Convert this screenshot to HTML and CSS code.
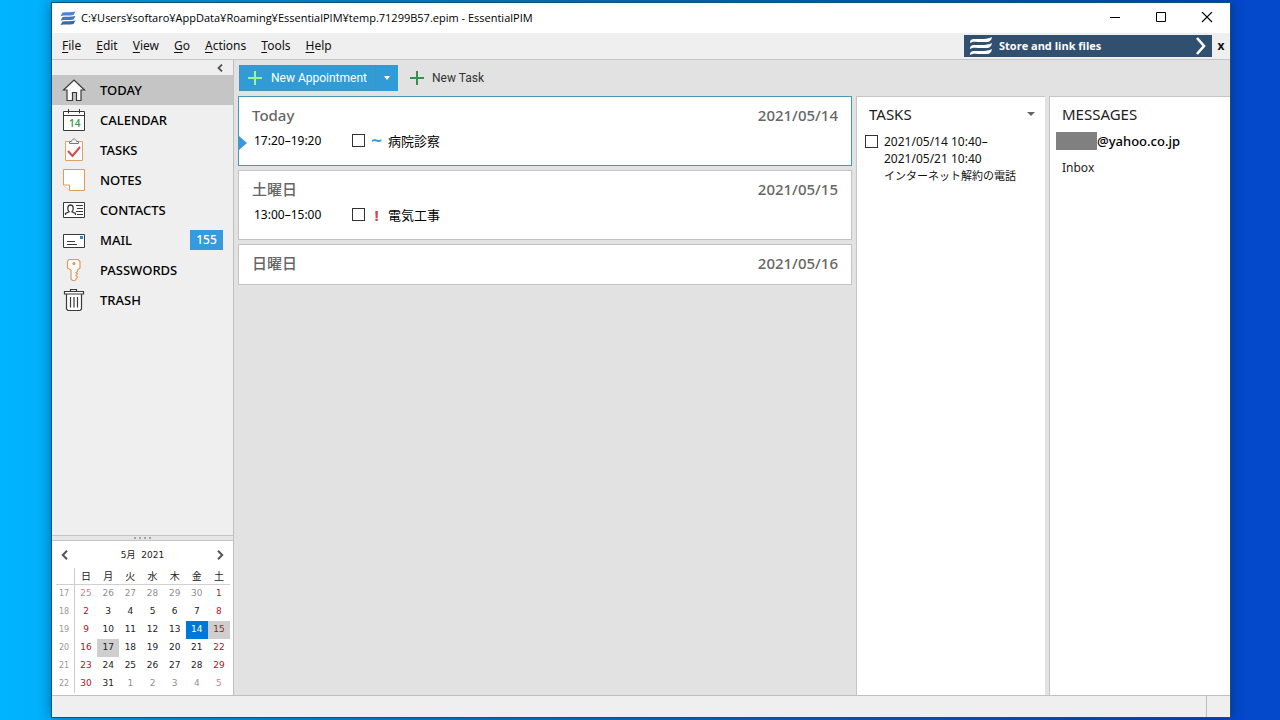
FILE: index.html
```html
<!DOCTYPE html>
<html lang="ja">
<head>
<meta charset="utf-8">
<title>EssentialPIM</title>
<link rel="stylesheet" href="styles.css">
</head>
<body>
<div class="window">
  <header class="titlebar">
    <svg class="app-logo" width="16" height="14" viewBox="0 0 16 14"><g fill="#4a86cf"><path d="M2.500 1.500C6 1 11 1.500 15.500.5L13.500 4C10 5 5 4 .5 5z"/><path d="M2.500 6C6 5.500 11 6 15.500 5l-2 3.500C10 9.500 5 8.500.5 9.500z" fill="#3f78c2"/><path d="M2.500 10.500C6 10 11 10.500 15.500 9.500l-2 3.500C10 14 5 13 .5 14z" fill="#3569b0"/></g></svg>
    <h1 class="title">C:¥Users¥softaro¥AppData¥Roaming¥EssentialPIM¥temp.71299B57.epim - EssentialPIM</h1>
    <div class="window-buttons">
      <button aria-label="Minimize"><svg width="12" height="12" viewBox="0 0 12 12"><path d="M1 5.500h10" stroke="#000"/></svg></button>
      <button aria-label="Maximize"><svg width="12" height="12" viewBox="0 0 12 12"><path d="M1.500 .5h9v9h-9z" fill="none" stroke="#000"/></svg></button>
      <button aria-label="Close"><svg width="12" height="12" viewBox="0 0 12 12"><path d="M1 0l10 10M11 0L1 10" stroke="#000" stroke-width="1.100"/></svg></button>
    </div>
  </header>
  <div class="menubar">
    <nav class="menus">
      <button><u>F</u>ile</button><button><u>E</u>dit</button><button><u>V</u>iew</button><button><u>G</u>o</button><button><u>A</u>ctions</button><button><u>T</u>ools</button><button><u>H</u>elp</button>
    </nav>
    <a class="promo" href="#">
      <svg width="22" height="18" viewBox="0 0 22 18" fill="#fff"><path d="M0 6C0 0 5 2.500 11 2c5 0 8-.5 11-2-1 6-5 5-11 5-5 0-8-1-11 1z"/><path d="M0 12C0 6 5 8.500 11 8c5 0 8-.5 11-2-1 6-5 5-11 5-5 0-8-1-11 1z"/><path d="M0 18C0 12 5 14.500 11 14c5 0 8-.5 11-2-1 6-5 5-11 5-5 0-8-1-11 1z"/></svg>
      <span>Store and link files</span>
      <svg class="promo-arrow" width="12" height="18" viewBox="0 0 12 18"><path d="M2 1l7 8-7 8" fill="none" stroke="#fff" stroke-width="2.600"/></svg>
    </a>
    <button class="promo-close" aria-label="Hide banner">x</button>
  </div>
  <div class="body">
    <aside class="sidebar">
      <button class="collapse" aria-label="Collapse sidebar"><svg width="6" height="8" viewBox="0 0 6 8"><path d="M5 .5L1.500 4 5 7.500" fill="none" stroke="#555" stroke-width="1.800"/></svg></button>
      <nav class="modules">
        <a class="module current" href="#"><svg width="24" height="24" viewBox="0 0 24 24" fill="none" stroke="#3a3a3a" stroke-width="1.200"><path d="M1.500 12L12 2 22.500 12H19v10.500h-4.500V14.500h-4v8H5V12z" fill="#fafafa"/></svg><span>TODAY</span></a>
        <a class="module" href="#"><svg width="24" height="24" viewBox="0 0 24 24" fill="none" stroke="#3a3a3a"><path d="M1.500 3.500h21v19h-21z" fill="#fff"/><path d="M1.500 7.500h21M6.500 1v4.500M17.500 1v4.500"/><text class="cal-num" x="7" y="19" stroke="none">14</text></svg><span>CALENDAR</span></a>
        <a class="module" href="#"><svg width="24" height="24" viewBox="0 0 24 24" fill="none"><path d="M3.500 3.500h17v19h-17z" fill="#fafafa" stroke="#dfa266"/><path d="M7.500 5.500v-2h2c1-3.500 4-3.500 5 0h2v2z" fill="#f4f4f4" stroke="#777"/><path d="M6 13l4.500 5L18 9" stroke="#cf4b4b" stroke-width="2"/></svg><span>TASKS</span></a>
        <a class="module" href="#"><svg width="24" height="24" viewBox="0 0 24 24" fill="#fff" stroke="#e09a55"><path d="M1.500 1.500h21v21H7.500l-6-5.500z"/><path d="M1.500 17h6v5.500"/></svg><span>NOTES</span></a>
        <a class="module" href="#"><svg width="24" height="24" viewBox="0 0 24 24" fill="none" stroke="#3a3a3a"><path d="M1.500 4.500h21v15h-21z" fill="#fff"/><path d="M3.500 17v-1.500L7 13.800C5.200 12 5.200 7 8.500 7s3.300 5 1.500 6.800l3.500 1.700V17" stroke-width="1.300"/><path d="M14 7.500h7M15 10.500h6M14 13.500h7M15 16.500h6"/></svg><span>CONTACTS</span></a>
        <a class="module" href="#"><svg width="24" height="24" viewBox="0 0 24 24" fill="none" stroke="#3a3a3a"><path d="M1.500 6.500h21v13h-21z" fill="#fff"/><path d="M5 13.500h8M5 16.500h10"/><path d="M18 8h3v3h-3z" fill="#2d86cb" stroke="none"/></svg><span>MAIL</span><span class="badge">155</span></a>
        <a class="module" href="#"><svg width="24" height="24" viewBox="0 0 24 24" fill="#fafafa" stroke="#e09a62" stroke-width="1.200"><path d="M7 1.500h9l2 2v6.500L15.500 12v1.500l-1.500 1 1.500 1.500-1.500 1.500 1.500 1.500-2.500 3.500h-2.500l-1.500-1.500V12L5.500 10V3.500z"/><circle cx="12" cy="5.500" r="1" fill="#e08a50"/></svg><span>PASSWORDS</span></a>
        <a class="module" href="#"><svg width="24" height="24" viewBox="0 0 24 24" fill="none" stroke="#3a3a3a" stroke-width="1.200"><path d="M4.500 5.500h15v15.500l-1.500 1.500H6l-1.500-1.500z" fill="#fff"/><path d="M2.500 3.500h19v2.500h-19z" fill="#fff"/><path d="M8.500 3.500v-2h6v2M8.500 9v10.500M12 9v10.500M15.500 9v10.500"/></svg><span>TRASH</span></a>
      </nav>
      <div class="splitter"><i></i><i></i><i></i><i></i></div>
      <section class="mini-calendar">
        <div class="month-bar">
          <button aria-label="Previous month"><svg width="7" height="10" viewBox="0 0 7 10"><path d="M6 .8L1.800 5 6 9.200" fill="none" stroke="#555" stroke-width="2"/></svg></button>
          <span>5月&nbsp; 2021</span>
          <button aria-label="Next month"><svg width="7" height="10" viewBox="0 0 7 10"><path d="M1 .8L5.200 5 1 9.200" fill="none" stroke="#555" stroke-width="2"/></svg></button>
        </div>
        <table class="month">
          <thead><tr><th></th><th>日</th><th>月</th><th>火</th><th>水</th><th>木</th><th>金</th><th>土</th></tr></thead>
          <tbody>
            <tr><th>17</th><td class="other sun">25</td><td class="other">26</td><td class="other">27</td><td class="other">28</td><td class="other">29</td><td class="other">30</td><td class="sun">1</td></tr>
            <tr><th>18</th><td class="sun">2</td><td>3</td><td>4</td><td>5</td><td>6</td><td>7</td><td class="sun">8</td></tr>
            <tr><th>19</th><td class="sun">9</td><td>10</td><td>11</td><td>12</td><td>13</td><td class="selected">14</td><td class="sun marked">15</td></tr>
            <tr><th>20</th><td class="sun">16</td><td class="marked">17</td><td>18</td><td>19</td><td>20</td><td>21</td><td class="sun">22</td></tr>
            <tr><th>21</th><td class="sun">23</td><td>24</td><td>25</td><td>26</td><td>27</td><td>28</td><td class="sun">29</td></tr>
            <tr><th>22</th><td class="sun">30</td><td>31</td><td class="other">1</td><td class="other">2</td><td class="other">3</td><td class="other">4</td><td class="other sun">5</td></tr>
          </tbody>
        </table>
      </section>
    </aside>
    <main class="workspace">
      <div class="toolbar">
        <div class="split-button">
          <button class="new-appointment"><svg width="14" height="14" viewBox="0 0 14 14"><path d="M7 0v14M0 7h14" stroke="#98f598" stroke-width="2"/></svg>New Appointment</button>
          <button class="drop" aria-label="More appointment types"><svg width="6" height="4" viewBox="0 0 6 4"><path d="M0 0h6L3 4z" fill="#fff"/></svg></button>
        </div>
        <button class="new-task"><svg width="14" height="14" viewBox="0 0 14 14"><path d="M7 0v14M0 7h14" stroke="#398d4e" stroke-width="2"/></svg>New Task</button>
      </div>
      <div class="columns">
        <div class="days">
          <section class="day today">
            <h2><span>Today</span><span>2021/05/14</span></h2>
            <div class="event"><span class="time">17:20–19:20</span><input type="checkbox" id="e1"><span class="mark low">~</span><label for="e1">病院診察</label></div>
            <svg class="now" width="8" height="14" viewBox="0 0 8 14"><path d="M0 0l8 7-8 7z" fill="#3b98dc"/></svg>
          </section>
          <section class="day">
            <h2><span>土曜日</span><span>2021/05/15</span></h2>
            <div class="event"><span class="time">13:00–15:00</span><input type="checkbox" id="e2"><span class="mark high">!</span><label for="e2">電気工事</label></div>
          </section>
          <section class="day empty">
            <h2><span>日曜日</span><span>2021/05/16</span></h2>
          </section>
        </div>
        <section class="panel tasks">
          <h2>TASKS<button aria-label="Task options"><svg width="8" height="4" viewBox="0 0 8 4"><path d="M0 0h8L4 4z" fill="#666"/></svg></button></h2>
          <div class="task"><input type="checkbox" id="t1"><label for="t1">2021/05/14 10:40–<br>2021/05/21 10:40<br><span class="kana">インターネット解約の電話</span></label></div>
        </section>
        <section class="panel messages">
          <h2>MESSAGES</h2>
          <div class="account"><span class="redacted"></span>@yahoo.co.jp</div>
          <a class="folder" href="#">Inbox</a>
        </section>
      </div>
    </main>
  </div>
  <footer class="statusbar"><span></span></footer>
</div>
</body>
</html>
```
FILE: styles.css
```css
* { box-sizing: border-box; }
body {
  margin: 0;
  height: 100vh;
  padding: 2px 49px 2px 51px;
  background: linear-gradient(to right, #00b4ff 0, #00b0fa 4%, #0b7fc9 40%, #0450c0 90%, #0449cb 97%, #0448cc 100%);
  font: 12px/16px "Noto Sans", "Noto Sans CJK JP", sans-serif;
  color: #111;
}
button { margin: 0; padding: 0; border: 0; background: none; font: inherit; color: inherit; display: flex; align-items: center; justify-content: center; }
a { color: inherit; text-decoration: none; }
h1, h2 { margin: 0; font: inherit; }
svg { display: block; flex: none; }
input[type="checkbox"] { appearance: none; flex: none; width: 13px; height: 13px; margin: 0; border: 1px solid #333; background: #fff; }

.window { display: flex; flex-direction: column; height: 100%; border: 1px solid #0a5580; background: #efefef; background-clip: padding-box; box-shadow: 0 0 12px rgba(0, 20, 60, .45); }
.titlebar { display: flex; align-items: center; height: 30px; padding-left: 8px; background: #fff; }
.title { flex: 1; margin-left: 5px; font-family: "Open Sans", sans-serif; font-size: 11px; white-space: nowrap; color: #000; }
.window-buttons { display: flex; }
.window-buttons button { width: 46px; height: 28px; }
.menubar { display: flex; align-items: center; height: 27px; border-bottom: 1px solid #c6c6c6; }
.menus { display: flex; flex: 1; gap: 15px; padding-left: 10px; }
.menus button { display: block; }
.menus u { text-underline-offset: 2px; }
.promo { display: flex; align-items: center; width: 248px; height: 22px; padding: 0 5px 0 6px; background: #31506f; color: #fff; font: bold 11px/16px "Open Sans", sans-serif; }
.promo span { flex: 1; margin-left: 7px; }
.promo-close { width: 18px; font-weight: bold; }

.body { display: flex; flex: 1; min-height: 0; }
.sidebar { display: flex; flex-direction: column; width: 182px; border-right: 1px solid #bfbfbf; }
.collapse { align-self: flex-end; width: 26px; height: 15px; }
.modules { flex: 1; }
.module { display: flex; align-items: center; gap: 14px; height: 30px; padding: 0 10px; font-size: 13px; font-weight: 500; color: #000; }
.module.current { background: #c5c5c5; }
.cal-num { font: 600 10px "Open Sans", sans-serif; fill: #3b9a4a; }
.badge { margin-left: auto; width: 33px; line-height: 20px; background: #369ade; color: #fff; font-size: 12px; text-align: center; }
.splitter { display: flex; align-items: center; justify-content: center; gap: 3px; height: 6px; border: solid #c4c4c4; border-width: 1px 0; background: #e6e6e6; }
.splitter i { width: 2px; height: 2px; background: #a5a5a5; }
.mini-calendar { padding: 0 3px 2px 4px; background: #fff; font-size: 10px; }
.month-bar { display: flex; align-items: center; justify-content: space-between; height: 27px; padding: 0 6px 0 5px; color: #222; }
.month-bar span { font-family: "DejaVu Sans", "Noto Sans CJK JP", sans-serif; font-size: 9px; }
.month { width: 100%; table-layout: fixed; border-collapse: separate; border-spacing: 0; font: 9px/12px "DejaVu Sans", "Noto Sans CJK JP", sans-serif; color: #222; }
.month th, .month td { height: 18px; padding: 0 0 2px; font-weight: normal; text-align: center; }
.month th:first-child { width: 19px; border-right: 1px solid #ccc; padding: 0 2px 0 0; color: #999; font-size: 8px; }
.month thead th { height: 17px; padding: 1px 0 0; border-bottom: 1px solid #d0d0d0; font-size: 10px; }
.month td.sun { color: #b0141e; }
.month td.other { color: #909090; }
.month td.other.sun { color: #d07f85; }
.month td.marked { background: #cecece; }
.month td.selected { background: #0076d6; color: #fff; }

.workspace { display: flex; flex-direction: column; flex: 1; min-width: 0; padding-left: 4px; background: #e2e2e2; }
.toolbar { display: flex; align-items: center; gap: 12px; height: 36px; padding-left: 1px; font-family: Roboto, sans-serif; }
.split-button { display: flex; height: 26px; background: #319bd6; color: #fff; }
.new-appointment { gap: 9px; width: 137px; border: 1px dotted #5c87a3; }
.drop { width: 22px; }
.new-task { gap: 8px; color: #333; }
.columns { display: grid; flex: 1; grid-template-columns: 1fr 189px 181px; gap: 4px; min-height: 0; }
.days { display: flex; flex-direction: column; gap: 4px; }
.day { position: relative; height: 70px; padding: 8px 13px 0; border: 1px solid #c3c3c3; background: #fff; }
.day.today { border-color: #4398b8; }
.day.empty { height: 41px; }
.day h2 { display: flex; justify-content: space-between; font: 500 15px/20px "Noto Sans", "Noto Sans CJK JP", sans-serif; color: #666; }
.event { display: flex; align-items: center; height: 31px; padding-left: 2px; color: #000; }
.event label { font-size: 13px; }
.time { width: 98px; }
.mark { width: 23px; text-align: center; font-weight: bold; }
.mark.low { color: #3297d2; font-family: "DejaVu Sans", sans-serif; font-size: 15px; }
.mark.high { color: #d04545; font-size: 15px; }
.now { position: absolute; left: 0; top: 39px; }
.panel { border: solid #c6c6c6; border-width: 1px 0 0 1px; background: #fff; }
.panel h2 { display: flex; align-items: center; justify-content: space-between; height: 34px; padding: 0 10px 0 12px; font-size: 15px; color: #222; }
.task { display: flex; gap: 6px; padding: 4px 0 0 8px; }
.task label { line-height: 17px; margin-top: -2px; }
.kana { font-size: 11px; white-space: nowrap; }
.account { display: flex; align-items: center; height: 20px; padding-left: 6px; font-size: 13px; font-weight: 500; color: #000; }
.redacted { width: 41px; height: 18px; background: #808080; }
.folder { display: block; padding: 9px 12px; color: #222; }
.statusbar { display: flex; justify-content: flex-end; height: 22px; border-top: 1px solid #c0c0c0; }
.statusbar span { width: 24px; border-left: 1px solid #c0c0c0; }
```
